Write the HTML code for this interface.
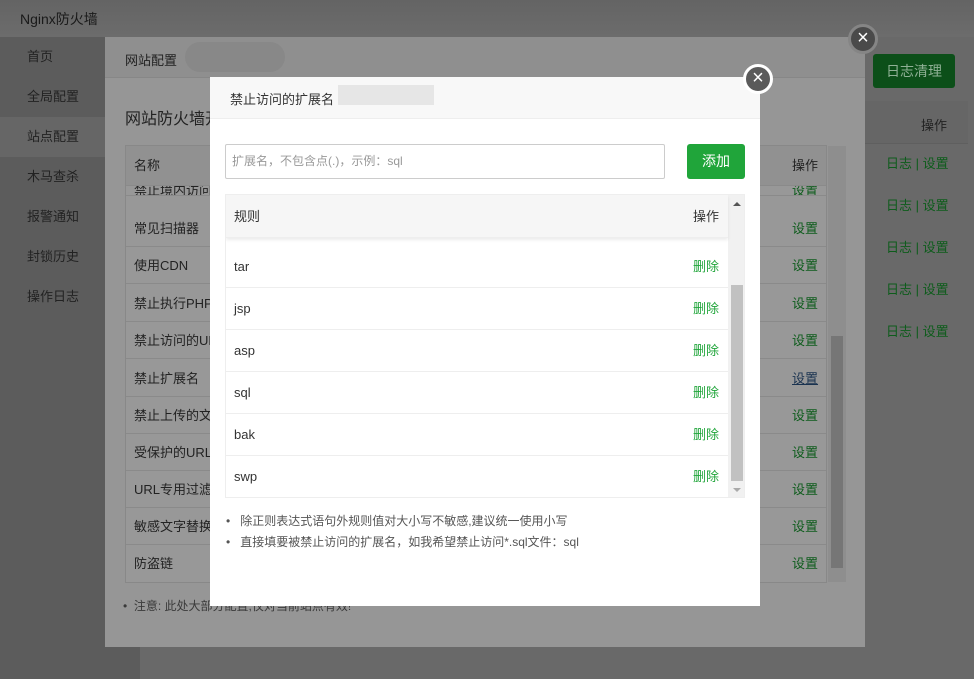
<!DOCTYPE html>
<html><head><meta charset="utf-8"><style>
*{margin:0;padding:0;box-sizing:border-box}
body{width:974px;height:679px;overflow:hidden;background:#696969;font-family:"Liberation Sans","Noto Sans CJK SC",sans-serif;font-size:13px;color:#333;position:relative}
.a{position:absolute}
.top{left:0;top:0;width:974px;height:37px;background:linear-gradient(#646464,#6c6c6c)}
.side{left:0;top:37px;width:140px;height:642px;background:#5c5c5c}
.side div{height:40px;line-height:40px;padding-left:27px;color:#222;font-size:13px}
.mid{left:105px;top:37px;width:760px;height:610px;background:#969696}
.mhd{left:0;top:0;width:760px;height:41px;background:#8f8f8f;border-bottom:1px solid #878787}
.otab{left:20px;top:108px;width:702px;height:438px;border:1px solid #888;background:#989898}
.orow{position:absolute;left:0;width:700px;height:37px;border-bottom:1px solid #8a8a8a;line-height:37px;padding-left:8px;color:#222}
.orow span{position:absolute;left:666px;color:#0d5c1b}
.g{color:#0d5c1b}
.modal{left:210px;top:77px;width:550px;height:529px;background:#fff}
.row{position:absolute;left:0;width:502px;height:42px;border-bottom:1px solid #eee;line-height:42px;padding-left:8px;color:#333}
.row span{position:absolute;right:9px;color:#20a53a}
.close{width:30px;height:30px;border-radius:50%;background:#555;border:3px solid #fff;color:#fff;text-align:center;line-height:22px;font-size:20px}
</style></head><body>
<div class="a top"><div class="a" style="left:20px;top:9px;font-size:14px;color:#1a1a1a">Nginx防火墙</div></div>
<div class="a side">
<div>首页</div><div>全局配置</div><div style="background:#666">站点配置</div><div>木马查杀</div><div>报警通知</div><div>封锁历史</div><div>操作日志</div>
</div>
<div class="a" style="left:873px;top:54px;width:82px;height:34px;background:#0c4f19;border-radius:3px;color:#8fb095;line-height:34px;text-align:center;font-size:14px">日志清理</div>
<div class="a" style="left:865px;top:101px;width:103px;height:43px;background:#666;border-bottom:1px solid #5f5f5f"><span class="a" style="left:56px;top:14px;color:#222">操作</span></div>
<div class="a" style="left:886px;top:156px;line-height:16px">
<div class="g" style="height:42px">日志 | 设置</div><div class="g" style="height:42px">日志 | 设置</div><div class="g" style="height:42px">日志 | 设置</div><div class="g" style="height:42px">日志 | 设置</div><div class="g" style="height:42px">日志 | 设置</div></div>
<div class="a mid">
<div class="a mhd"><span class="a" style="left:20px;top:13px;color:#222">网站配置</span><span class="a" style="left:80px;top:5px;width:100px;height:30px;border-radius:15px;background:#888"></span></div>
<div class="a" style="left:20px;top:68px;font-size:16px;color:#222">网站防火墙开</div>
<div class="a otab">
<div class="orow" style="top:0;height:40px;line-height:40px;background:#919191">名称<span style="color:#222">操作</span></div>
<div class="orow" style="top:40px;height:10px;line-height:10px;overflow:hidden">禁止境内访问<span>设置</span></div>
<div class="orow" style="top:64px">常见扫描器<span>设置</span></div>
<div class="orow" style="top:101px">使用CDN<span>设置</span></div>
<div class="orow" style="top:139px">禁止执行PHP<span>设置</span></div>
<div class="orow" style="top:176px">禁止访问的URL<span>设置</span></div>
<div class="orow" style="top:214px">禁止扩展名<span style="color:#1a3350;text-decoration:underline">设置</span></div>
<div class="orow" style="top:251px">禁止上传的文件<span>设置</span></div>
<div class="orow" style="top:288px">受保护的URL<span>设置</span></div>
<div class="orow" style="top:325px">URL专用过滤<span>设置</span></div>
<div class="orow" style="top:362px">敏感文字替换<span>设置</span></div>
<div class="orow" style="top:399px;border:0">防盗链<span>设置</span></div>
<div class="a" style="left:702px;top:0;width:18px;height:436px;background:#8e8e8e"><div class="a" style="left:3px;top:190px;width:12px;height:232px;background:#767676"></div></div>
</div>
<div class="a" style="left:18px;top:560px;font-size:12px;color:#3a3a3a">•&nbsp; 注意: 此处大部分配置,仅对当前站点有效!</div>
</div>
<div class="a close" style="left:848px;top:24px;background:#4a4a4a;border-color:#858585">×</div>
<div class="a modal">
<div class="a" style="left:0;top:0;width:550px;height:42px;background:#f8f8f8;border-bottom:1px solid #eee"><span class="a" style="left:20px;top:12px;color:#333">禁止访问的扩展名</span><span class="a" style="left:128px;top:8px;width:96px;height:20px;background:#e6e6e6"></span></div>
<div class="a" style="left:15px;top:67px;width:440px;height:35px;border:1px solid #ccc;border-radius:2px;color:#999;font-size:12px;line-height:33px;padding-left:6px">扩展名，不包含点(.)，示例：sql</div>
<div class="a" style="left:477px;top:67px;width:58px;height:35px;background:#20a53a;border-radius:3px;color:#fff;line-height:35px;text-align:center;font-size:14px">添加</div>
<div class="a" style="left:15px;top:117px;width:520px;height:304px;border:1px solid #eee;overflow:hidden">
<div class="row" style="top:0;height:43px;line-height:43px;background:#f6f6f6;box-shadow:0 2px 3px rgba(0,0,0,.08);z-index:2">规则<span style="color:#333">操作</span></div>
<div class="row" style="top:51px">tar<span>删除</span></div>
<div class="row" style="top:93px">jsp<span>删除</span></div>
<div class="row" style="top:135px">asp<span>删除</span></div>
<div class="row" style="top:177px">sql<span>删除</span></div>
<div class="row" style="top:219px">bak<span>删除</span></div>
<div class="row" style="top:261px;border:0">swp<span>删除</span></div>
<div class="a" style="left:502px;top:0;width:18px;height:304px;background:#f1f1f1"><div class="a" style="left:3px;top:90px;width:12px;height:196px;background:#c1c1c1"></div><div class="a" style="left:5px;top:7px;border:4px solid transparent;border-bottom:4px solid #555;border-top:0"></div><div class="a" style="left:5px;top:293px;border:4px solid transparent;border-top:4px solid #aaa;border-bottom:0"></div></div>
</div>
<div class="a" style="left:16px;top:434px;font-size:12px;color:#555;line-height:21px">
<div>•&nbsp;&nbsp; 除正则表达式语句外规则值对大小写不敏感,建议统一使用小写</div>
<div>•&nbsp;&nbsp; 直接填要被禁止访问的扩展名，如我希望禁止访问*.sql文件：sql</div></div>
</div>
<div class="a close" style="left:743px;top:64px;background:#5a5a5a">×</div>
</body></html>
